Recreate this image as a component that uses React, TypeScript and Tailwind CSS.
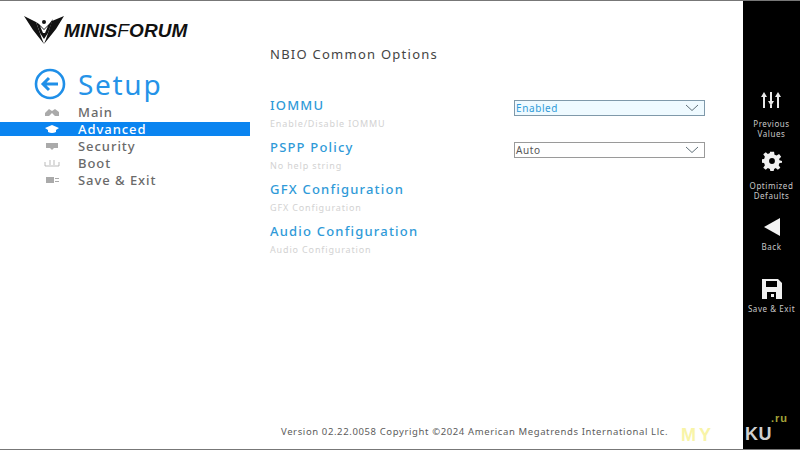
const font = { fontFamily: '"Noto Sans", "Open Sans", sans-serif' };

function Logo() {
  return (
    <div className="flex items-end h-[44px] pl-[23px] pt-[14px]">
      <svg width="42" height="30" viewBox="0 0 42 30" className="shrink-0">
        <path d="M1 1 L13 7 L19 24 L21 29 L10 15 Z" fill="#111" />
        <path d="M41 1 L29 6 L23 24 L21 29 L33 14 Z" fill="#111" />
        <path d="M16 9 L21 14 L26 9 L30 4 L25 18 L21 24 L17 18 L13 7 Z" fill="#111" />
        <circle cx="21" cy="7" r="2" fill="#111" />
        <path d="M17 11 L21 15 L25 11 L22 18 L20 18 Z" fill="#fff" />
      </svg>
      <span className="text-[19px] leading-[20px] font-extrabold italic text-[#111] tracking-[0.1px] -ml-[1px] pb-[4px] font-['Liberation_Sans']">
        MINIS<span className="font-normal">F</span>ORUM
      </span>
    </div>
  );
}

function NavIcon({ name, color }: { name: string; color: string }) {
  const c = { fill: color };
  return (
    <svg width="16" height="10" viewBox="0 0 16 10">
      {name === "main" && <path d="M1 9 V6 L5 2 L8 4 L11 2 L15 5 V9 H11 L8 6 L5 9 Z" {...c} />}
      {name === "adv" && <path d="M1 4 L8 1 L15 4 L12 6 V8 Q8 10 4 8 V6 Z" {...c} />}
      {name === "sec" && <path d="M2 2 H14 V7 H10 L8 9 L6 7 H2 Z" {...c} />}
      {name === "boot" && <path d="M1 4 V8 H15 V4 M6 2 V7 M10 2 V7" fill="none" stroke={color} strokeWidth="0.8" />}
      {name === "save" && <path d="M2 2 H10 V8 H2 Z M11 3 H15 V4 H11 Z M11 6 H15 V7 H11 Z" {...c} />}
    </svg>
  );
}

function NavItem({ icon, label, active }: { icon: string; label: string; active?: boolean }) {
  return (
    <div className={`flex items-center h-[14px] mb-[3px] ${active ? "bg-[#0a84f0] text-white" : "text-[#6a6a6a]"}`}>
      <div className="w-[78px] pl-[44px] flex items-center">
        <NavIcon name={icon} color={active ? "#ffffff" : "#aaaaaa"} />
      </div>
      <span className="text-[13px] tracking-[0.95px] leading-[14px] font-medium">{label}</span>
    </div>
  );
}

function Option({ title, help, value, focused }: { title: string; help: string; value?: string; focused?: boolean }) {
  return (
    <div className="h-[42px] flex items-start">
      <div className="w-[244px] shrink-0">
        <div className="text-[13px] leading-[18px] tracking-[1.2px] font-medium text-[#2f9ad8]">{title}</div>
        <div className="text-[9px] leading-[12px] mt-[4px] tracking-[0.85px] text-[#d2d2d2]">{help}</div>
      </div>
      {value && (
        <div className={`w-[191px] h-[16px] mt-[4px] border flex items-center justify-between pl-[1px] pr-[5px] text-[10px] tracking-[0.6px] ${focused ? "border-[#7f99aa] bg-[#effaff] text-[#2f9ad8]" : "border-[#9a9a9a] bg-white text-[#555]"}`}>
          <span>{value}</span>
          <svg width="14" height="8" viewBox="0 0 14 8"><path d="M1 1 L7 6.5 L13 1" fill="none" stroke="#5f6f78" strokeWidth="1" /></svg>
        </div>
      )}
    </div>
  );
}

function SideButton({ icon, lines, h, top, gap }: { icon: React.ReactNode; lines: string[]; h: string; top: string; gap: string }) {
  return (
    <div className={`flex flex-col items-center ${h} ${top}`}>
      <div className="h-[24px] flex items-center justify-center">{icon}</div>
      <div className={`${gap} text-[8px] leading-[9.5px] tracking-[0.55px] text-[#c8c8c8] text-center whitespace-nowrap`}>
        {lines.map((l) => <div key={l}>{l}</div>)}
      </div>
    </div>
  );
}

export default function App() {
  return (
    <div style={font} className="relative w-[800px] h-[450px] overflow-hidden flex bg-white border-t border-b border-[#777]">
      <aside className="w-[250px] shrink-0">
        <Logo />
        <div className="flex items-center pl-[34px] mt-[19px] h-[40px]">
          <svg width="32" height="32" viewBox="0 0 32 32">
            <circle cx="16" cy="16" r="14" fill="none" stroke="#1f8fe8" strokeWidth="2.6" />
            <path d="M24 16 H10 M15 10 L9 16 L15 22" fill="none" stroke="#1f8fe8" strokeWidth="3" />
          </svg>
          <span className="ml-[12px] text-[28px] leading-[30px] tracking-[1.7px] text-[#2593e8]">Setup</span>
        </div>
        <div className="mt-[1px]">
          <NavItem icon="main" label="Main" />
          <NavItem icon="adv" label="Advanced" active />
          <NavItem icon="sec" label="Security" />
          <NavItem icon="boot" label="Boot" />
          <NavItem icon="save" label="Save & Exit" />
        </div>
      </aside>
      <main className="flex-1 flex flex-col pl-[20px]">
        <div className="mt-[45px] text-[13px] leading-[16px] tracking-[1.25px] text-[#444]">NBIO Common Options</div>
        <div className="mt-[34px]">
          <Option title="IOMMU" help="Enable/Disable IOMMU" value="Enabled" focused />
          <Option title="PSPP Policy" help="No help string" value="Auto" />
          <Option title="GFX Configuration" help="GFX Configuration" />
          <Option title="Audio Configuration" help="Audio Configuration" />
        </div>
        <div className="mt-auto mb-[11px] pl-[11px] text-[9.5px] leading-[12px] tracking-[0.62px] text-[#5c5c5c] whitespace-nowrap">
          Version 02.22.0058 Copyright ©2024 American Megatrends International Llc.
        </div>
      </main>
      <aside className="w-[57px] shrink-0 bg-black flex flex-col items-center pt-[88px] -my-[1px]">
        <SideButton
          h="h-[61px]"
          top=""
          gap="mt-[7px]"
          lines={["Previous", "Values"]}
          icon={
            <svg width="20" height="16" viewBox="0 0 20 16" fill="#e8e8e8">
              <path d="M2 5 H4 V16 H2 Z M9 0 H11 V9 H9 Z M9 13 H11 V16 H9 Z M16 5 H18 V16 H16 Z" />
              <path d="M3 0 L6 5 H0 Z M17 0 L20 5 H14 Z M7 9 H13 L10 14 Z" />
            </svg>
          }
        />
        <SideButton
          h="h-[62px]"
          top=""
          gap="mt-[8px]"
          lines={["Optimized", "Defaults"]}
          icon={
            <svg width="20" height="20" viewBox="0 0 24 24" fill="#f0f0f0">
              <path fillRule="evenodd" d="M9.5 1 H14.5 L15 4.5 L17.5 5.5 L20.5 3.5 L23 7 L20.5 9.5 L21 11 L24 12 V14 L21 14.5 L20 17 L22 20 L19 22.5 L16.5 20.5 L14.5 21.5 L14 24 H10 L9.5 21.5 L7 20.5 L4.5 22.5 L1.5 20 L3.5 17 L2.5 14.5 L0 14 V10 L2.5 9.5 L3.5 7 L1.5 4 L4.5 1.5 L7 3.5 L9.5 2.5 Z M12 8.5 A3.5 3.5 0 1 0 12 15.5 A3.5 3.5 0 1 0 12 8.5 Z" />
            </svg>
          }
        />
        <SideButton
          h="h-[61px]"
          top="pt-[4px]"
          gap="mt-[3px]"
          lines={["Back"]}
          icon={<svg width="16" height="18" viewBox="0 0 16 18"><path d="M16 0 V18 L0 9 Z" fill="#f2f2f2" /></svg>}
        />
        <SideButton
          h="h-[45px]"
          top="pt-[5px]"
          gap="mt-[3px]"
          lines={["Save & Exit"]}
          icon={
            <svg width="20" height="20" viewBox="0 0 20 20">
              <path fillRule="evenodd" d="M0 0 H16 L20 4 V20 H0 Z M4 2 V8 H15 V2 Z M5 13 V20 H14 V13 Z" fill="#f0f0f0" />
              <rect x="9" y="15" width="3" height="3" fill="#f0f0f0" />
            </svg>
          }
        />
      </aside>
      <div className="absolute left-[681px] top-[424px] text-[18px] leading-[20px] font-bold tracking-[3px] text-[#f8f4a8] font-['Liberation_Sans']">MY</div>
      <div className="absolute left-[745px] top-[423px] text-[18px] leading-[20px] font-bold tracking-[0.5px] text-[#cfcfcf] font-['Liberation_Sans']">KU</div>
      <div className="absolute left-[771px] top-[410px] text-[11px] leading-[14px] font-bold tracking-[1px] text-[#a5a53a] font-['Liberation_Sans']">.ru</div>
    </div>
  );
}
